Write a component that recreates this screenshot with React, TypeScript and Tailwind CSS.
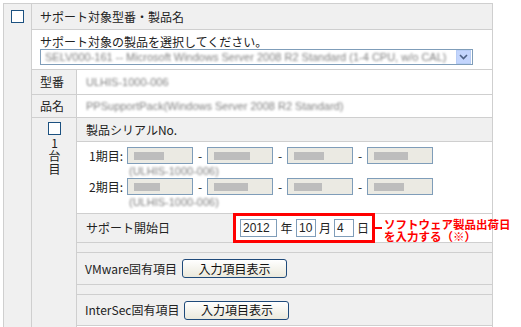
import React from "react";

const line = "border-[#cfcfcf]";

const Masked: React.FC<{ text: string; className?: string }> = ({ text, className }) => (
  <span
    className={
      "inline-block whitespace-nowrap font-['Liberation_Sans',sans-serif] text-[11px] text-[#808080] blur-[1.2px] " +
      (className ?? "")
    }
  >
    {text}
  </span>
);

const CheckBox: React.FC = () => (
  <div className="w-[13px] h-[13px] border border-[#1c5180] bg-white" />
);

const SerialBox: React.FC<{ fill: string }> = ({ fill }) => (
  <div className="w-[66px] h-[17px] border border-[#7f9db9] bg-[#ebeae3] flex items-center pl-[6px] overflow-hidden">
    <span className={"inline-block h-[8px] bg-[#bdbdbd] blur-[0.6px] " + fill} />
  </div>
);

const SerialRow: React.FC<{ label: string; fills: string[]; model: string }> = ({
  label,
  fills,
  model,
}) => (
  <div className="flex">
    <div className="w-[50px] h-[17px] flex items-center justify-end pr-[4px]">{label}</div>
    <div className="flex flex-col">
      <div className="flex items-center">
        {fills.map((f, i) => (
          <React.Fragment key={i}>
            {i > 0 && <span className="w-[14px] text-center leading-none">-</span>}
            <SerialBox fill={f} />
          </React.Fragment>
        ))}
      </div>
      <div className="h-[14px] flex items-center pl-[2px]">
        <Masked text={`(${model})`} />
      </div>
    </div>
  </div>
);

const XpButton: React.FC<{ label: string; w: string }> = ({ label, w }) => (
  <button
    className={
      "h-[19px] rounded-[3px] border border-[#1f4a7a] bg-gradient-to-b from-white to-[#ebe9dc] text-[12px] leading-none text-[#111] " +
      w
    }
  >
    {label}
  </button>
);

const DateInput: React.FC<{ value: string; w: string }> = ({ value, w }) => (
  <div
    className={
      "h-[18px] border border-[#7f9db9] bg-white flex items-center pl-[2px] font-['Liberation_Sans',sans-serif] text-[12px] " +
      w
    }
  >
    {value}
  </div>
);

export default function App() {
  return (
    <div className="w-[521px] h-[327px] overflow-hidden bg-white pl-[3px] pt-[3px] font-['Noto_Sans_CJK_JP',sans-serif] text-[12px] text-[#222]">
      <div className={`w-[490px] h-[340px] flex border-l border-t border-r ${line}`}>
        <div className={`w-[28px] shrink-0 bg-[#f0f0f0] border-r ${line} flex justify-center pt-[6px]`}>
          <CheckBox />
        </div>

        <div className="flex-1 flex flex-col min-w-0">
          <div className={`h-[26px] shrink-0 bg-[#f0f0f0] border-b ${line} flex items-center pl-[8px]`}>
            サポート対象型番・製品名
          </div>

          <div className={`h-[40px] shrink-0 bg-white border-b ${line} flex flex-col pl-[8px] pt-[4px]`}>
            <div className="h-[15px] leading-[15px]">サポート対象の製品を選択してください。</div>
            <div className="w-[433px] h-[16px] border border-[#7f9db9] bg-white flex items-center overflow-hidden">
              <div className="flex-1 overflow-hidden pl-[4px] flex items-center">
                <Masked text="SELV000-161 -- Microsoft Windows Server 2008 R2 Standard (1-4 CPU, w/o CAL)" />
              </div>
              <div className="w-[15px] h-[14px] mr-px bg-[#c3d5fd] border border-[#b8cdf5] flex items-center justify-center shrink-0">
                <svg width="9" height="6" viewBox="0 0 9 6">
                  <path d="M1 1 L4.5 4.5 L8 1" fill="none" stroke="#4d6185" strokeWidth="1.6" />
                </svg>
              </div>
            </div>
          </div>

          <div className={`h-[25px] shrink-0 flex border-b ${line}`}>
            <div className={`w-[45px] bg-[#f0f0f0] border-r ${line} flex items-center pl-[8px]`}>型番</div>
            <div className="flex-1 bg-white flex items-center pl-[9px]">
              <Masked text="ULHIS-1000-006" />
            </div>
          </div>

          <div className={`h-[23px] shrink-0 flex border-b ${line}`}>
            <div className={`w-[45px] bg-[#f0f0f0] border-r ${line} flex items-center pl-[8px]`}>品名</div>
            <div className="flex-1 bg-white flex items-center pl-[9px]">
              <Masked text="PPSupportPack(Windows Server 2008 R2 Standard)" />
            </div>
          </div>

          <div className="flex flex-1">
            <div className={`w-[45px] shrink-0 bg-[#f0f0f0] border-r ${line} flex flex-col items-center pt-[4px]`}>
              <CheckBox />
              {/* 1台目, set upright top to bottom */}
              <div className="mt-[2px] [writing-mode:vertical-rl] [text-orientation:upright] tracking-[1px] leading-[14px]">
                1台目
              </div>
            </div>

            <div className="flex-1 flex flex-col min-w-0">
              <div className={`h-[24px] shrink-0 bg-[#f0f0f0] border-b ${line} flex items-center pl-[9px]`}>
                製品シリアルNo.
              </div>

              <div className={`h-[72px] shrink-0 bg-white border-b ${line} flex flex-col pt-[5px]`}>
                <SerialRow label="1期目:" fills={["w-[30px]", "w-[36px]", "w-[30px]", "w-[34px]"]} model="ULHIS-1000-006" />
                <SerialRow label="2期目:" fills={["w-[26px]", "w-[34px]", "w-[28px]", "w-[30px]"]} model="ULHIS-1000-006" />
              </div>

              <div className={`h-[29px] shrink-0 flex border-b ${line}`}>
                <div className="w-[156px] bg-[#f0f0f0] flex items-center pl-[9px]">サポート開始日</div>
                <div className="flex-1 bg-white">
                  <div className="relative -mt-px w-[142px] h-[30px] border-[3px] border-[#ff0000] flex items-center pl-[4px]">
                    <DateInput value="2012" w="w-[37px]" />
                    <span className="w-[19px] text-center">年</span>
                    <DateInput value="10" w="w-[20px]" />
                    <span className="w-[18px] text-center">月</span>
                    <DateInput value="4" w="w-[20px]" />
                    <span className="w-[18px] text-center">日</span>

                    <div className="absolute left-full top-[2px] flex items-start">
                      <div className="mt-[9px] w-[10px] h-[2px] bg-[#ff0000]" />
                      <div className="ml-[2px] text-[11.5px] leading-[12px] font-bold text-[#ff0000] whitespace-nowrap">
                        <div>ソフトウェア製品出荷日</div>
                        <div>を入力する（※）</div>
                      </div>
                    </div>
                  </div>
                </div>
              </div>

              <div className={`h-[10px] shrink-0 bg-[#f0f0f0] border-b ${line}`} />

              <div className={`h-[32px] shrink-0 bg-[#f0f0f0] border-b ${line} flex items-center pl-[8px] gap-[5px]`}>
                <span>VMware固有項目</span>
                <XpButton label="入力項目表示" w="w-[105px]" />
              </div>

              <div className={`h-[10px] shrink-0 bg-[#f0f0f0] border-b ${line}`} />

              <div className={`h-[31px] shrink-0 bg-[#f0f0f0] border-b ${line} flex items-center pl-[8px] gap-[5px]`}>
                <span>InterSec固有項目</span>
                <XpButton label="入力項目表示" w="w-[105px]" />
              </div>

              <div className="flex-1 bg-white" />
            </div>
          </div>
        </div>
      </div>
    </div>
  );
}
